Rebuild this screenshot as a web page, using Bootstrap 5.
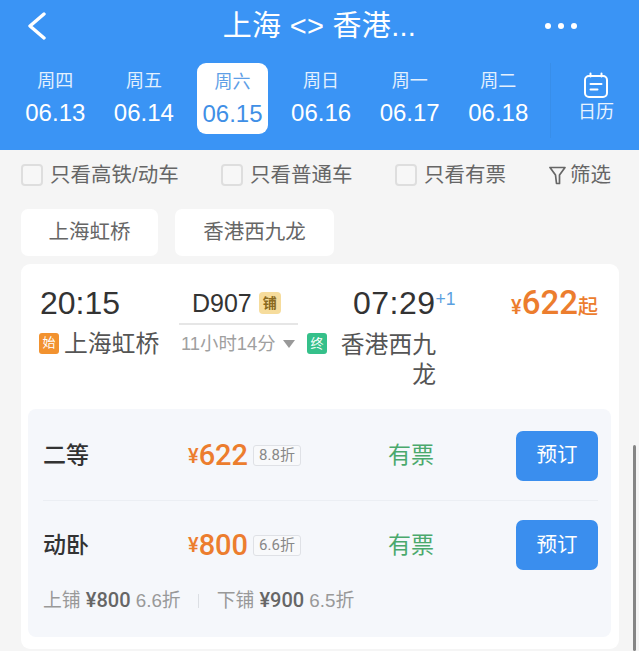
<!DOCTYPE html>
<html lang="zh-CN">
<head>
    <meta charset="UTF-8">
    <meta name="viewport" content="width=device-width, initial-scale=1.0">
    <title>上海 - 香港</title>
    <link href="https://cdn.jsdelivr.net/npm/bootstrap@5.3.1/dist/css/bootstrap.min.css" rel="stylesheet">
    <style>
        body {
            margin: 0;
            height: 651px;
            overflow: hidden;
            position: relative;
            background: #f5f5f5;
            color: #333;
            font-family: "Liberation Sans", "Noto Sans CJK SC", sans-serif;
        }

        /* header */
        .top-bar { background: #3a94f5; height: 150px; color: #fff; }
        .title-row { height: 63px; padding-bottom: 11px; }
        .title-side { width: 150px; }
        .back-side { padding-left: 27px; }
        .dots-side { padding-right: 62px; }
        .title-text { font-size: 29px; line-height: 1; letter-spacing: .3px; white-space: nowrap; }
        .more-dots { gap: 7px; }
        .more-dots span { width: 6px; height: 6px; border-radius: 50%; background: #fff; }
        .date-row { padding-left: 11px; }
        .date-cell { width: 88.6px; height: 71px; padding-top: 7px; }
        .date-cell .wk { font-size: 18px; line-height: 22px; color: #e3f0fe; }
        .date-cell .dt { font-size: 24px; line-height: 30px; margin-top: 6px; }
        .date-tile { padding-top: 0; }
        .date-on { width: 71px; background: #fff; color: #3f8fe6; border-radius: 9px; margin: 0 auto; height: 71px; padding-top: 8px; }
        .date-on .wk { color: #5f9fe6; }
        .cal-cell { width: 89px; height: 75px; margin-left: 7px; border-left: 1px solid #388ee9; padding: 9px 0 0 3px; }
        .cal-cell .cal-label { font-size: 18px; line-height: 22px; margin-top: 3px; color: #e8f3ff; }

        /* filters */
        .filter-row { height: 50px; padding-left: 21px; color: #666; font-size: 20.5px; }
        .fake-check { width: 22px; height: 22px; border: 2px solid #dedede; border-radius: 4px; background: #f7f7f7; margin-right: 7px; }
        .filter-a { width: 200px; }
        .filter-b { width: 174px; }
        .filter-c { width: 154px; }

        .stn-tabs { padding-left: 21px; gap: 17px; margin-top: 9px; }
        .stn-tab { height: 47px; background: #fff; border-radius: 7px; color: #666; font-size: 20.5px; }
        .stn-a { width: 137px; }
        .stn-b { width: 159px; }

        /* train card */
        .train-box { margin: 8px 20px 0 21px; height: 385px; background: #fff; border-radius: 9px; }
        .train-head { height: 145px; padding: 20px 21px 0 18px; }
        .time-big { font-size: 32px; line-height: 38px; color: #333; }
        .stn-name { font-size: 23.8px; line-height: 30px; color: #555; }
        .head-left { width: 140px; }
        .head-mid { width: 119px; }
        .head-end { width: 148px; margin-left: 9px; }
        .time-left { padding-left: 1px; }
        .time-end { padding-left: 46px; }
        .time-end .time-big { letter-spacing: .5px; }
        .plus-one { font-size: 17.5px; line-height: 20px; color: #5ba0e0; margin-top: 5px; }
        .start-line { margin-top: 5px; }
        .start-line .stn-name { padding-top: 2px; }
        .end-name { width: 100px; text-align: right; margin-left: 9px; margin-top: 8px; }
        .mini-tag { width: 20px; height: 21px; border-radius: 3px; color: #fff; font-size: 13px; flex: none; }
        .tag-start { background: #f2922f; margin-right: 5px; }
        .tag-end { background: #35c08a; margin-top: 11px; }
        .train-no { font-size: 25px; line-height: 38px; padding-left: 13px; color: #333; }
        .pu-tag { width: 22px; height: 22px; background: #f6dc9c; color: #8a6a20; border-radius: 4px; font-size: 14px; font-weight: 700; margin-left: 7px; }
        .mid-line { height: 2px; background: #e6e6e6; margin-top: 1px; }
        .dur-row { font-size: 18.4px; line-height: 24px; color: #a0a0a0; padding-left: 2px; margin-top: 7px; }
        .dur-arrow { width: 0; height: 0; border-left: 6px solid transparent; border-right: 6px solid transparent; border-top: 8px solid #999; margin-left: 7px; }
        .from-price { margin-left: auto; color: #ec7d2e; line-height: 38px; font-weight: 500; font-family: Roboto, "Noto Sans CJK SC", sans-serif; white-space: nowrap; }
        .from-price .yen { font-size: 20px; }
        .from-price .num { font-size: 33px; }
        .from-price .qi { font-size: 20px; }

        /* seat panel */
        .seat-panel { margin: 0 8px 0 7px; height: 228px; background: #f5f7fb; border-radius: 8px; padding: 0 13px 0 15px; }
        .seat-row { height: 88px; }
        .seat-one { height: 92px; padding-top: 2px; border-bottom: 1px solid #ebeef3; }
        .seat-name { width: 145px; font-size: 23px; font-weight: 500; color: #333; }
        .seat-price { width: 200px; color: #ec7d2e; font-weight: 500; font-family: Roboto, "Noto Sans CJK SC", sans-serif; }
        .seat-price .yen { font-size: 20px; }
        .seat-price .num { font-size: 29px; line-height: 1; }
        .off-tag { height: 21px; border: 1px solid #dfe1e6; border-radius: 3px; font-size: 15px; font-weight: 400; color: #888; background: #f8f9fb; padding: 0 5px; margin-left: 5px; }
        .seat-left { width: 128px; font-size: 23px; color: #4aa96c; }
        .book-btn { width: 82px; height: 50px; background: #3a8eee; color: #fff; border: 0; border-radius: 7px; font-size: 20.5px; padding: 0; }
        .berth-row { font-size: 18.8px; color: #999; margin-top: -1px; line-height: 24px; }
        .berth-row b { font-weight: 500; font-size: 20px; color: #666; font-family: Roboto, sans-serif; }
        .berth-sep { width: 1px; height: 14px; background: #dcdfe4; margin: 0 18px 0 17px; }

        .scroll-thumb { position: absolute; left: 633px; top: 445px; width: 3px; height: 206px; background: #858585; border-radius: 2px; }
    </style>
</head>
<body>
    <div class="top-bar">
        <div class="title-row d-flex align-items-center justify-content-between">
            <div class="title-side back-side d-flex">
                <svg width="20" height="28" viewBox="0 0 20 28" fill="none" stroke="#fff" stroke-width="3.4" stroke-linecap="round" stroke-linejoin="round"><path d="M17 2 L3 14 L17 26"/></svg>
            </div>
            <div class="title-text">上海 &lt;&gt; 香港...</div>
            <div class="title-side dots-side d-flex justify-content-end">
                <div class="more-dots d-flex"><span></span><span></span><span></span></div>
            </div>
        </div>
        <div class="date-row d-flex">
            <div class="date-cell text-center"><div class="wk">周四</div><div class="dt">06.13</div></div>
            <div class="date-cell text-center"><div class="wk">周五</div><div class="dt">06.14</div></div>
            <div class="date-cell date-tile text-center"><div class="date-on"><div class="wk">周六</div><div class="dt">06.15</div></div></div>
            <div class="date-cell text-center"><div class="wk">周日</div><div class="dt">06.16</div></div>
            <div class="date-cell text-center"><div class="wk">周一</div><div class="dt">06.17</div></div>
            <div class="date-cell text-center"><div class="wk">周二</div><div class="dt">06.18</div></div>
            <div class="cal-cell d-flex flex-column align-items-center">
                <svg width="26" height="26" viewBox="0 0 26 26" fill="none" stroke="#fff" stroke-width="2" stroke-linecap="round"><rect x="2" y="4" width="22" height="21" rx="4"/><path d="M7.5 1.5 V4.5 M18.5 1.5 V4.5 M7.5 12 H18.5 M7.5 17.5 H14.5"/></svg>
                <div class="cal-label">日历</div>
            </div>
        </div>
    </div>

    <div class="filter-row d-flex align-items-center">
        <div class="filter-a d-flex align-items-center"><span class="fake-check"></span>只看高铁/动车</div>
        <div class="filter-b d-flex align-items-center"><span class="fake-check"></span>只看普通车</div>
        <div class="filter-c d-flex align-items-center"><span class="fake-check"></span>只看有票</div>
        <div class="d-flex align-items-center gap-1">
            <svg width="17" height="19" viewBox="0 0 17 19" fill="none" stroke="#666" stroke-width="1.7" stroke-linejoin="round"><path d="M1 1.5 H16 L10.5 9 V17.5 H7.5 L6.5 9 Z"/></svg>
            <span>筛选</span>
        </div>
    </div>

    <div class="stn-tabs d-flex">
        <div class="stn-tab stn-a d-flex align-items-center justify-content-center">上海虹桥</div>
        <div class="stn-tab stn-b d-flex align-items-center justify-content-center">香港西九龙</div>
    </div>

    <div class="train-box">
        <div class="train-head d-flex">
            <div class="head-left">
                <div class="time-big time-left">20:15</div>
                <div class="start-line d-flex align-items-center">
                    <span class="mini-tag tag-start d-flex align-items-center justify-content-center">始</span>
                    <span class="stn-name">上海虹桥</span>
                </div>
            </div>
            <div class="head-mid">
                <div class="d-flex align-items-center">
                    <span class="train-no">D907</span>
                    <span class="pu-tag d-flex align-items-center justify-content-center">铺</span>
                </div>
                <div class="mid-line"></div>
                <div class="dur-row d-flex align-items-center text-nowrap">11小时14分<span class="dur-arrow"></span></div>
            </div>
            <div class="head-end">
                <div class="d-flex time-end">
                    <span class="time-big">07:29</span>
                    <span class="plus-one">+1</span>
                </div>
                <div class="d-flex">
                    <span class="mini-tag tag-end d-flex align-items-center justify-content-center">终</span>
                    <span class="stn-name end-name">香港西九龙</span>
                </div>
            </div>
            <div class="from-price"><span class="yen">¥</span><span class="num">622</span><span class="qi">起</span></div>
        </div>

        <div class="seat-panel">
            <div class="seat-row seat-one d-flex align-items-center">
                <div class="seat-name">二等</div>
                <div class="seat-price d-flex align-items-center"><span class="yen">¥</span><span class="num">622</span><span class="off-tag d-flex align-items-center">8.8折</span></div>
                <div class="seat-left">有票</div>
                <button class="btn book-btn" type="button">预订</button>
            </div>
            <div class="seat-row d-flex align-items-center">
                <div class="seat-name">动卧</div>
                <div class="seat-price d-flex align-items-center"><span class="yen">¥</span><span class="num">800</span><span class="off-tag d-flex align-items-center">6.6折</span></div>
                <div class="seat-left">有票</div>
                <button class="btn book-btn" type="button">预订</button>
            </div>
            <div class="berth-row d-flex align-items-center">
                <span>上铺 <b>¥800</b> 6.6折</span>
                <span class="berth-sep"></span>
                <span>下铺 <b>¥900</b> 6.5折</span>
            </div>
        </div>
    </div>

    <div class="scroll-thumb"></div>
</body>
</html>
